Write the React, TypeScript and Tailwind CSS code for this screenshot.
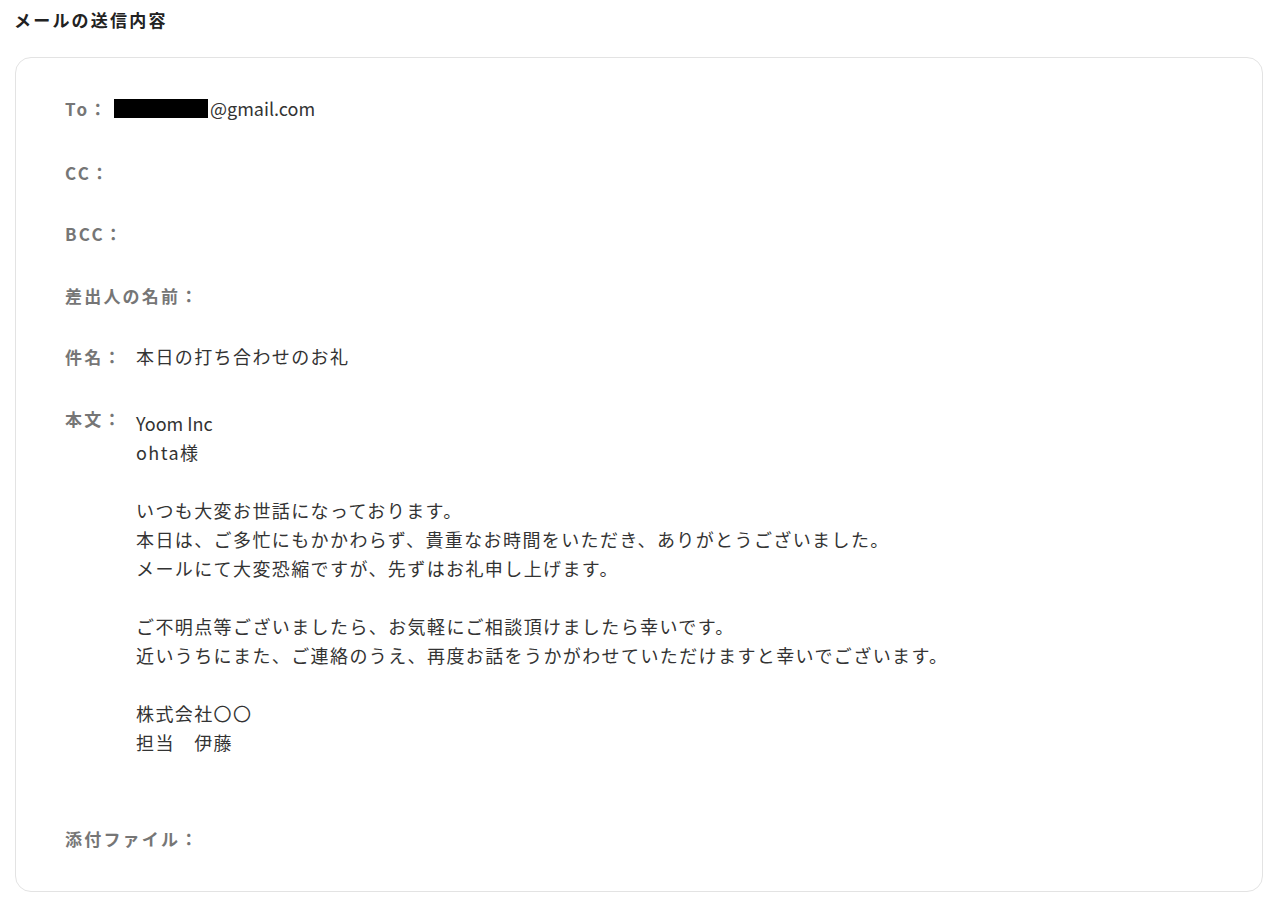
import React from 'react';

const bodyLines: string[] = [
  'Yoom Inc',
  'ohta様',
  '',
  'いつも大変お世話になっております。',
  '本日は、ご多忙にもかかわらず、貴重なお時間をいただき、ありがとうございました。',
  'メールにて大変恐縮ですが、先ずはお礼申し上げます。',
  '',
  'ご不明点等ございましたら、お気軽にご相談頂けましたら幸いです。',
  '近いうちにまた、ご連絡のうえ、再度お話をうかがわせていただけますと幸いでございます。',
  '',
  '株式会社〇〇',
  '担当　伊藤',
  '',
];

// latin-only lines keep their natural spacing
const isLatin = (s: string) => /^[\x20-\x7e]*$/.test(s);

const Row: React.FC<{ label: string; children?: React.ReactNode; last?: boolean }> = ({ label, children, last }) => (
  <div className={`flex items-start ${last ? '' : 'mb-[32.5px]'}`}>
    <div className="min-w-[71px] shrink-0 whitespace-nowrap text-[17px] leading-[29px] font-bold tracking-[2.2px] text-[#767676]">
      {label}
    </div>
    <div className="text-[18px] leading-[29px] tracking-[1.4px] text-[#333333]">{children}</div>
  </div>
);

export default function App() {
  return (
    <div
      className="min-h-[897px] bg-white px-[14px] pt-[7px]"
      style={{ fontFamily: '"Noto Sans CJK JP", "Noto Sans", sans-serif' }}
    >
      <h1 className="text-[17px] leading-[26px] font-bold tracking-[2.2px] text-[#222222]">メールの送信内容</h1>

      <div className="mt-[24px] ml-px mr-[-1px] rounded-[16px] border border-[#e3e3e3] pl-[49px] pt-[36px] pb-[38px]">
        <Row label="To：">
          <span className="inline-flex items-center tracking-normal">
            <span className="mr-[2px] ml-[-22px] inline-block h-[19px] w-[94px] bg-black" />
            <span>@gmail.com</span>
          </span>
        </Row>
        <Row label="CC：" />
        <Row label="BCC：" />
        <Row label="差出人の名前：" />
        <Row label="件名：">本日の打ち合わせのお礼</Row>
        <Row label="本文：">
          <div className="pt-[5px] pb-[5.5px]">
            {bodyLines.map((line, i) => (
              <div key={i} className={`h-[29px] whitespace-pre ${isLatin(line) ? 'tracking-normal' : ''}`}>
                {line}
              </div>
            ))}
          </div>
        </Row>
        <Row label="添付ファイル：" last />
      </div>
    </div>
  );
}
